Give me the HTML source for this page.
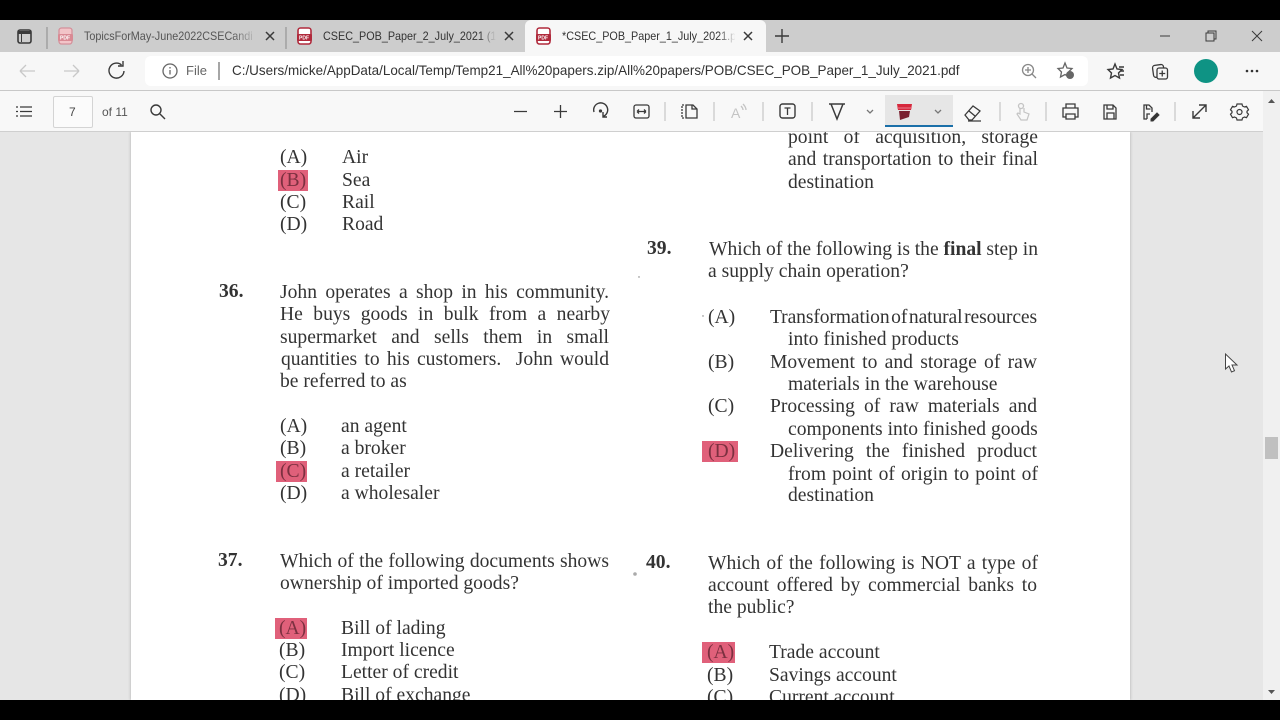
<!DOCTYPE html>
<html lang="en"><head><meta charset="utf-8"><title>CSEC POB Paper 1</title>
<style>
html,body{margin:0;padding:0;background:#000;width:1280px;height:720px;overflow:hidden}
#s{position:relative;width:1280px;height:720px;overflow:hidden;background:#000;font-family:"Liberation Sans",sans-serif}
.b{position:absolute}
.t{position:absolute;white-space:nowrap;font-size:12px;line-height:16px;color:#3a3a3a;overflow:hidden}
.tab{transform:scaleX(.9);transform-origin:left top;width:192px}
#pdf{position:absolute;left:0;top:132px;width:1263px;height:568px;background:#e6e6e6;overflow:hidden}
#page{position:absolute;left:131px;top:0;width:999px;height:568px;background:#fff;box-shadow:0 0 3px #aaa}
#txt{position:absolute;left:0;top:-132px;width:1263px;height:720px;font-family:"Liberation Serif",serif;font-size:19.6px;line-height:22px;color:#333;filter:blur(.3px)}
#txt div{position:absolute;white-space:nowrap}
#txt .j{text-align:justify;text-align-last:justify;white-space:normal;word-spacing:-3px}
#txt .h{background:#e0607a;height:21px}
#txt .r{color:#7c3040}
#txt .n{font-weight:bold}
</style></head><body><div id="s">
<div class="b" style="left:0;top:20px;width:1280px;height:32px;background:#cdcdcd"></div>
<div class="b" style="left:525px;top:20px;width:241px;height:32px;background:#f7f7f7;border-radius:6px 6px 0 0"></div>
<div class="b" style="left:0;top:52px;width:1280px;height:39px;background:#f7f7f7;border-bottom:1px solid #c8c8c8;box-sizing:border-box"></div>
<div class="b" style="left:145px;top:56px;width:943px;height:30px;background:#fff;border-radius:6px"></div>
<div class="b" style="left:0;top:91px;width:1263px;height:41px;background:#f8f8f8"></div>
<div class="b" style="left:885px;top:95px;width:68px;height:32px;background:#e6e6e6;border-bottom:2px solid #1a6fa8;box-sizing:border-box"></div>
<div class="b" style="left:53px;top:96px;width:38px;height:30px;background:#fbfbfb;border:1px solid #d4d4d4;border-radius:2px"></div>
<div class="t tab" style="left:84px;top:28px;color:#555">TopicsForMay-June2022CSECandi</div>
<div class="b" style="left:232px;top:24px;width:26px;height:24px;background:linear-gradient(90deg,rgba(205,205,205,0),#cdcdcd)"></div>
<div class="t tab" style="left:323px;top:28px;color:#333">CSEC_POB_Paper_2_July_2021 (1)</div>
<div class="b" style="left:480px;top:24px;width:16px;height:24px;background:linear-gradient(90deg,rgba(205,205,205,0),#cdcdcd)"></div>
<div class="t tab" style="left:562px;top:28px;color:#333">*CSEC_POB_Paper_1_July_2021.pdf</div>
<div class="b" style="left:718px;top:24px;width:18px;height:24px;background:linear-gradient(90deg,rgba(247,247,247,0),#f7f7f7)"></div>
<div class="t" style="left:186px;top:63px;font-size:13px;color:#666">File</div>
<div class="t" style="left:232px;top:63px;font-size:13.45px;color:#333">C:/Users/micke/AppData/Local/Temp/Temp21_All%20papers.zip/All%20papers/POB/CSEC_POB_Paper_1_July_2021.pdf</div>
<div class="t" style="left:69px;top:104px;font-size:12px;color:#444">7</div>
<div class="t" style="left:102px;top:104px;font-size:12px;color:#555">of 11</div>
<div id="pdf"><div id="page"></div>
<div id="txt">
<div class="h" style="left:278px;top:170px;width:30px"></div>
<div class="h" style="left:276px;top:461px;width:31px"></div>
<div class="h" style="left:275px;top:618px;width:32px"></div>
<div class="h" style="left:702px;top:441px;width:36px"></div>
<div class="h" style="left:702px;top:642px;width:33px"></div>
<div style="left:280px;top:147px">(A)</div><div style="left:342px;top:147px">Air</div>
<div class="r" style="left:280px;top:170px">(B)</div><div style="left:342px;top:170px">Sea</div>
<div style="left:280px;top:192px">(C)</div><div style="left:342px;top:192px">Rail</div>
<div style="left:280px;top:214px">(D)</div><div style="left:342px;top:214px">Road</div>
<div class="n" style="left:219px;top:281px">36.</div>
<div class="j" style="left:280px;top:282px;width:329px">John operates a shop in his community.</div>
<div class="j" style="left:280px;top:304px;width:330px">He buys goods in bulk from a nearby</div>
<div class="j" style="left:280px;top:327px;width:329px">supermarket and sells them in small</div>
<div class="j" style="left:281px;top:349px;width:328px">quantities to his customers. &nbsp;John would</div>
<div style="left:280px;top:371px">be referred to as</div>
<div style="left:280px;top:416px">(A)</div><div style="left:341px;top:416px">an agent</div>
<div style="left:280px;top:438px">(B)</div><div style="left:341px;top:438px">a broker</div>
<div class="r" style="left:280px;top:461px">(C)</div><div style="left:341px;top:461px">a retailer</div>
<div style="left:280px;top:483px">(D)</div><div style="left:341px;top:483px">a wholesaler</div>
<div class="n" style="left:218px;top:550px">37.</div>
<div class="j" style="left:280px;top:551px;width:329px">Which of the following documents shows</div>
<div style="left:280px;top:573px">ownership of imported goods?</div>
<div class="r" style="left:279px;top:618px">(A)</div><div style="left:341px;top:618px">Bill of lading</div>
<div style="left:279px;top:640px">(B)</div><div style="left:341px;top:640px">Import licence</div>
<div style="left:279px;top:662px">(C)</div><div style="left:341px;top:662px">Letter of credit</div>
<div style="left:279px;top:685px">(D)</div><div style="left:341px;top:685px">Bill of exchange</div>
<div class="j" style="left:788px;top:127px;width:250px">point of acquisition, storage</div>
<div class="j" style="left:788px;top:149px;width:250px">and transportation to their final</div>
<div style="left:788px;top:172px">destination</div>
<div class="n" style="left:647px;top:238px">39.</div>
<div class="j" style="left:709px;top:239px;width:329px">Which of the following is the <b>final</b> step in</div>
<div style="left:708px;top:261px">a supply chain operation?</div>
<div style="left:708px;top:307px">(A)</div>
<div class="j" style="left:770px;top:307px;width:267px;word-spacing:-5px;letter-spacing:-.12px">Transformation of natural resources</div>
<div style="left:788px;top:329px">into finished products</div>
<div style="left:708px;top:352px">(B)</div>
<div class="j" style="left:770px;top:352px;width:267px">Movement to and storage of raw</div>
<div style="left:788px;top:374px">materials in the warehouse</div>
<div style="left:708px;top:396px">(C)</div>
<div class="j" style="left:770px;top:396px;width:267px">Processing of raw materials and</div>
<div style="left:788px;top:419px">components into finished goods</div>
<div class="r" style="left:708px;top:441px">(D)</div>
<div class="j" style="left:770px;top:441px;width:267px">Delivering the finished product</div>
<div class="j" style="left:788px;top:464px;width:250px">from point of origin to point of</div>
<div style="left:788px;top:485px">destination</div>
<div class="n" style="left:646px;top:552px">40.</div>
<div class="j" style="left:708px;top:553px;width:330px">Which of the following is NOT a type of</div>
<div class="j" style="left:708px;top:575px;width:329px">account offered by commercial banks to</div>
<div style="left:708px;top:597px">the public?</div>
<div class="r" style="left:707px;top:642px">(A)</div><div style="left:769px;top:642px">Trade account</div>
<div style="left:707px;top:665px">(B)</div><div style="left:769px;top:665px">Savings account</div>
<div style="left:707px;top:687px">(C)</div><div style="left:769px;top:687px">Current account</div>
</div></div>
<div class="b" style="left:0;top:131px;width:1263px;height:1px;background:#cfcfcf"></div>
<div class="b" style="left:1263px;top:91px;width:17px;height:609px;background:#f0f0f0"></div>
<div class="b" style="left:1265px;top:437px;width:13px;height:22px;background:#c0c0c0"></div>
<svg class="b" style="left:0;top:0" width="1280" height="720" viewBox="0 0 1280 720" fill="none" stroke="#3a3a3a" stroke-width="1.3">
<rect x="18" y="30" width="13" height="13" rx="2" stroke-width="1.6"/><path d="M18 32.500h13" stroke-width="3"/><path d="M21.500 33v9" stroke-width="1"/>
<path d="M47 27v22M286 27v22" stroke="#999"/>
<rect x="59" y="28" width="13" height="16" rx="2.500" fill="#f2c4c8" stroke="#d4909a"/><rect x="58" y="34" width="15" height="7" rx="1" fill="#d98a94" stroke="none"/><text x="60" y="39.500" font-family="Liberation Sans" font-size="5" font-weight="bold" fill="#fff" stroke="none">PDF</text>
<rect x="298" y="28" width="13" height="16" rx="2.500" fill="#fff" stroke="#b02a3c" stroke-width="1.600"/><rect x="297" y="34" width="15" height="7" rx="1" fill="#b02a3c" stroke="none"/><text x="299" y="39.500" font-family="Liberation Sans" font-size="5" font-weight="bold" fill="#fff" stroke="none">PDF</text>
<rect x="537" y="28" width="13" height="16" rx="2.500" fill="#fff" stroke="#b02a3c" stroke-width="1.600"/><rect x="536" y="34" width="15" height="7" rx="1" fill="#b02a3c" stroke="none"/><text x="538" y="39.500" font-family="Liberation Sans" font-size="5" font-weight="bold" fill="#fff" stroke="none">PDF</text>
<path d="M266 32l8 8M274 32l-8 8M505 32l8 8M513 32l-8 8M744 32l8 8M752 32l-8 8" stroke-width="1.500"/>
<path d="M782 29v14M775 36h14" stroke-width="1.400"/>
<path d="M1160 36h10" stroke-width="1"/>
<path d="M1207 33h8v8h-8zM1209 33v-2h8v8h-2" stroke-width="1" transform="translate(-1,0)"/>
<path d="M1252 31l10 10M1262 31l-10 10" stroke-width="1"/>
<path d="M20 71h15M20 71l6-6M20 71l6 6M64 71h15M79 71l-6-6M79 71l-6 6" stroke="#c8c8c8"/>
<path d="M121.500 65a7.500 7.500 0 1 0 2.500 6M123 61v5h-5" stroke-width="1.400"/>
<circle cx="170" cy="71" r="7" stroke="#666"/><path d="M170 70v4.500M170 67v1.500" stroke="#666"/>
<path d="M219 62v18" stroke="#777"/>
<circle cx="1028" cy="70" r="5.500" stroke="#888"/><path d="M1032 74l4 4M1025 70h6M1028 67v6" stroke="#888"/>
<path d="M1065 63l2 5 5 .5-3.500 3.500 1 5-4.500-2.500-4.500 2.500 1-5-3.500-3.500 5-.5z" stroke="#666"/><circle cx="1070" cy="75" r="4" fill="#666" stroke="none"/>
<path d="M1115 64l2 5 5 .5-3.500 3.500 1 5-4.500-2.500-4.500 2.500 1-5-3.500-3.500 5-.5zM1119 67h5M1120 71h4M1120 75h4" stroke-width="1.400"/>
<rect x="1153" y="65" width="11" height="12" rx="2.500" transform="rotate(-8 1158 71)"/><rect x="1157" y="68" width="10.500" height="11" rx="2" fill="#f7f7f7"/><path d="M1162.250 70.500v6M1159.250 73.500h6"/>
<ellipse cx="1206" cy="71" rx="12" ry="12" fill="#0e9384" stroke="none"/>
<circle cx="1247" cy="71" r="1.300" fill="#333" stroke="none"/><circle cx="1252" cy="71" r="1.300" fill="#333" stroke="none"/><circle cx="1257" cy="71" r="1.300" fill="#333" stroke="none"/>
<path d="M20 107h12M20 111.500h12M20 116h12M16 107h2M16 111.500h2M16 116h2" stroke-width="1.200"/>
<circle cx="156" cy="110" r="5" stroke-width="1.400"/><path d="M160 114l5 5" stroke-width="1.400"/>
<path d="M514 111.500h13M554 111.500h13M560.500 105v13"/>
<path d="M595 113a7 7 0 1 1 9 4.500M604 113v5h4" stroke-width="1.400" transform="translate(-1,-1)"/><circle cx="600.500" cy="111" r="1" fill="#333"/>
<rect x="634" y="105" width="15" height="13" rx="2"/><path d="M637 111.500h9M637 111.500l2-2M637 111.500l2 2M646 111.500l-2-2M646 111.500l-2 2"/>
<path d="M665 102v19M714 102v19M763 102v19M812 102v19M1000 102v19M1046 102v19M1175 102v19" stroke="#c9c9c9" stroke-width="1.300"/>
<path d="M684 105h-2v13h2" stroke-dasharray="2 1"/><path d="M686 105h7l4 4v9h-11z"/><path d="M692 105v4h5"/>
<text x="731" y="118" font-family="Liberation Sans" font-size="14" fill="#c4c4c4" stroke="none">A</text><path d="M741 106q2 2 2 4M743 104q3 3 3 6" stroke="#c4c4c4"/>
<rect x="780" y="104" width="15" height="14" rx="2.500" stroke-width="1.400"/><path d="M784.500 108h6M787.500 108v7" stroke-width="1.300"/>
<path d="M829 104h16M831 104l6 15 6-15" stroke-width="1.500"/>
<path d="M867 110l3 3 3-3M935 110l3 3 3-3" stroke="#777"/>
<path d="M897 104h15l-1 6h-13z" fill="#d6283c" stroke="none"/><path d="M897 108h15" stroke="#e88090" stroke-width="1"/><path d="M899 111h11l-1 6-9 3z" fill="#7a2030" stroke="none"/>
<path d="M965 115l8-9 7 5-8 9h-3zM969 111l6 5M968 121h13"/>
<circle cx="1021" cy="106" r="2.500" stroke="#c4c4c4"/><path d="M1020 108v6l-2-1-1 1 4 6h6l2-6-5-2v-4" stroke="#c4c4c4" stroke-width="1.200"/>
<path d="M1066 108v-4h9v4M1066 117h-3v-9h15v9h-3M1066 114h9v5h-9z" stroke-width="1.300"/>
<path d="M1105 105h8l3 3v11h-12v-14zM1107 105v4h6v-4M1107 119v-6h7v6" stroke-width="1.300"/>
<path d="M1152 112v-4l-3-3h-5v14h3M1146.500 105v4h4M1147 119v-5h3" stroke-width="1.300"/><path d="M1151 119l6-6 2 2-6 6h-2z" fill="#333" stroke-width="1"/>
<path d="M1193 118l13-13M1199 105h7v7M1193 111v7h7" stroke-width="1.400"/>
<path d="M1237 104h5l.5 2 2 1 2-.7 2 3.500-1.500 1.500v1.400l1.500 1.500-2 3.500-2-.7-2 1-.5 2h-5l-.5-2-2-1-2 .7-2-3.500 1.500-1.500v-1.400l-1.500-1.500 2-3.500 2 .7 2-1z" stroke-width="1.200"/><circle cx="1239.500" cy="112" r="2.500" stroke-width="1.200"/>
<path d="M1268 103l3.500-4 3.500 4zM1268 690l3.500 4 3.500-4z" fill="#555" stroke="none"/>
<path d="M1225.500 354v15l3.500-3 2.500 6 3-1.300-2.500-5.700h5z" fill="#fff" stroke="#444" stroke-width="1"/>
<circle cx="635" cy="574" r="1.800" fill="#aaa" stroke="none"/><circle cx="703" cy="316" r=".7" fill="#777" stroke="none"/><circle cx="639" cy="277" r=".7" fill="#777" stroke="none"/>
</svg>
</div></body></html>
